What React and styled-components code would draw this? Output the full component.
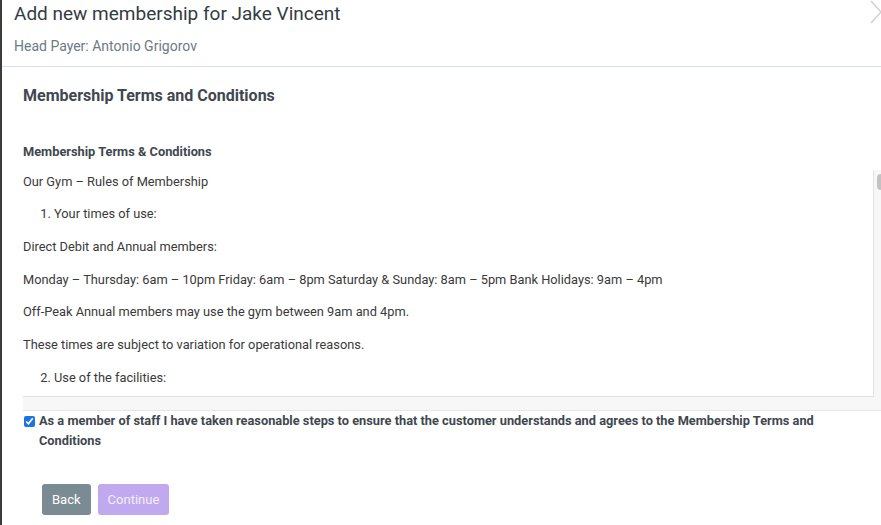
import React from 'react';
import styled, {createGlobalStyle} from 'styled-components';

const Global = createGlobalStyle`
html, body {
  margin: 0;
  padding: 0;
  background: #3b3b3b;
  overflow: hidden;
}
* {
  box-sizing: border-box;
}
`;

const Viewport = styled.div`
width: 881px;
height: 525px;
overflow: hidden;
padding-left: 2px;
background: #3b3b3b;
`;

const Modal = styled.div`
position: relative;
width: 900px;
height: 525px;
background: #fff;
font-family: Roboto, "Liberation Sans", sans-serif;
color: #3d4650;
`;

const Close = styled.svg`
position: absolute;
top: 0;
right: 9px;
width: 24px;
height: 24px;
stroke: #cfcfcf;
stroke-width: 1.5;
fill: none;
`;

const Header = styled.div`
padding: 2px 12px 12px;
border-bottom: 1px solid #d6e0e7;
`;

const Title = styled.h1`
margin: 0;
font-size: 19px;
line-height: 24px;
font-weight: 400;
color: #343b42;
`;

const SubTitle = styled.div`
margin-top: 12px;
font-size: 14px;
line-height: 16px;
color: #6b7a86;
`;

const Body = styled.div`
padding: 19px 0 0 21px;
`;

const SectionTitle = styled.h2`
margin: 0;
font-size: 16px;
line-height: 20px;
font-weight: 700;
color: #3f474f;
`;

const TermsHeading = styled.h3`
margin: 38px 0 10px;
font-size: 12.8px;
line-height: 16px;
font-weight: 700;
color: #3f474f;
`;

const ScrollFrame = styled.div`
display: flex;
background: #f7f7f7;
border-bottom: 1px solid #e6e6e6;
padding-bottom: 13px;
`;

const TermsBox = styled.div`
width: 851px;
height: 227px;
padding-top: 1.5px;
overflow: hidden;
background: #fff;
border-right: 1px solid #e3e3e3;
border-bottom: 1px solid #e3e3e3;
font-size: 12.8px;
line-height: 19.5px;
color: #3a3a3a;
`;

const Para = styled.p`
margin: 0 0 13.2px;
`;

const List = styled.ol`
margin: 0 0 13.2px;
padding-left: 31px;
`;

const Track = styled.div`
width: 12px;
padding: 4px 0 0 3px;
`;

const Thumb = styled.div`
width: 8px;
height: 16px;
border-radius: 4px;
background: #c2c2c2;
`;

const CheckRow = styled.label`
display: flex;
align-items: flex-start;
gap: 4px;
padding-right: 60px;
font-size: 12.8px;
line-height: 20px;
font-weight: 700;
color: #3f474f;
`;

const Check = styled.input`
margin: 5px 0 0 1px;
width: 11px;
height: 11px;
flex: none;
accent-color: #1a73e8;
`;

const Actions = styled.div`
display: flex;
gap: 7px;
padding: 33px 0 0 19px;
`;

const Button = styled.button`
height: 31px;
padding: 0 10px;
border: none;
border-radius: 3px;
font-family: Roboto, "Liberation Sans", sans-serif;
font-size: 13px;
background: ${p => p.primary ? '#c1a9ef' : '#7b8b93'};
color: ${p => p.primary ? '#f3eefc' : '#fff'};
`;

export default function App() {
  return (
    <Viewport>
      <Global />
      <Modal>
        <Close viewBox='0 0 24 24'>
          <path d='M2 1 L22 23 M22 1 L2 23' />
        </Close>
        <Header>
          <Title>Add new membership for Jake Vincent</Title>
          <SubTitle>Head Payer: Antonio Grigorov</SubTitle>
        </Header>
        <Body>
          <SectionTitle>Membership Terms and Conditions</SectionTitle>
          <TermsHeading>Membership Terms &amp; Conditions</TermsHeading>
          <ScrollFrame>
            <TermsBox>
              <Para>Our Gym – Rules of Membership</Para>
              <List start={1}><li>Your times of use:</li></List>
              <Para>Direct Debit and Annual members:</Para>
              <Para>Monday – Thursday: 6am – 10pm Friday: 6am – 8pm Saturday &amp; Sunday: 8am – 5pm Bank Holidays: 9am – 4pm</Para>
              <Para>Off-Peak Annual members may use the gym between 9am and 4pm.</Para>
              <Para>These times are subject to variation for operational reasons.</Para>
              <List start={2}><li>Use of the facilities:</li></List>
            </TermsBox>
            <Track><Thumb /></Track>
          </ScrollFrame>
          <CheckRow>
            <Check type='checkbox' defaultChecked />
            <span>As a member of staff I have taken reasonable steps to ensure that the customer understands and agrees to the Membership Terms and Conditions</span>
          </CheckRow>
          <Actions>
            <Button>Back</Button>
            <Button primary disabled>Continue</Button>
          </Actions>
        </Body>
      </Modal>
    </Viewport>
  );
}
